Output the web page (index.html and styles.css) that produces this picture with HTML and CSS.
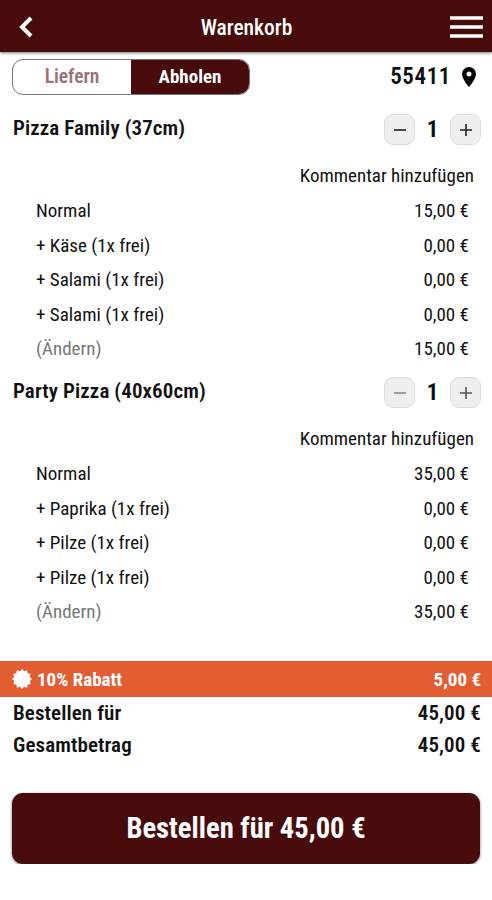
FILE: index.html
```html
<!DOCTYPE html>
<html lang="de">
<head>
<meta charset="utf-8">
<title>Warenkorb</title>
<link rel="stylesheet" href="styles.css">
</head>
<body>
<header class="topbar">
  <svg class="back" viewBox="0 0 14 22"><path d="M12 2 3 11l9 9"/></svg>
  <h1 class="title">Warenkorb</h1>
  <svg class="menu" viewBox="0 0 33 22"><path d="M0 2h33M0 11h33M0 20h33"/></svg>
</header>
<main>
  <section class="mode">
    <div class="toggle"><span class="option">Liefern</span><span class="option active">Abholen</span></div>
    <div class="place"><span>55411</span><svg class="pin" viewBox="0 0 14 20"><path fill-rule="evenodd" d="M7 0a7 7 0 0 0-7 7c0 5 7 13 7 13s7-8 7-13a7 7 0 0 0-7-7Zm0 4.5a2.5 2.5 0 1 1 0 5 2.5 2.5 0 0 1 0-5Z"/></svg></div>
  </section>
  <section class="item">
    <div class="head"><h2>Pizza Family (37cm)</h2>
      <div class="stepper"><button class="step"><svg viewBox="0 0 14 14"><path d="M1 7h12"/></svg></button><b>1</b><button class="step"><svg viewBox="0 0 14 14"><path d="M1 7h12M7 1v12"/></svg></button></div></div>
    <p class="comment">Kommentar hinzufügen</p>
    <div class="row"><span>Normal</span><span>15,00 €</span></div>
    <div class="row"><span>+ Käse (1x frei)</span><span>0,00 €</span></div>
    <div class="row"><span>+ Salami (1x frei)</span><span>0,00 €</span></div>
    <div class="row"><span>+ Salami (1x frei)</span><span>0,00 €</span></div>
    <div class="row"><span class="edit">(Ändern)</span><span>15,00 €</span></div>
  </section>
  <section class="item">
    <div class="head"><h2>Party Pizza (40x60cm)</h2>
      <div class="stepper"><button class="step muted"><svg viewBox="0 0 14 14"><path d="M1 7h12"/></svg></button><b>1</b><button class="step dim"><svg viewBox="0 0 14 14"><path d="M1 7h12M7 1v12"/></svg></button></div></div>
    <p class="comment">Kommentar hinzufügen</p>
    <div class="row"><span>Normal</span><span>35,00 €</span></div>
    <div class="row"><span>+ Paprika (1x frei)</span><span>0,00 €</span></div>
    <div class="row"><span>+ Pilze (1x frei)</span><span>0,00 €</span></div>
    <div class="row"><span>+ Pilze (1x frei)</span><span>0,00 €</span></div>
    <div class="row"><span class="edit">(Ändern)</span><span>35,00 €</span></div>
  </section>
  <section class="discount"><span class="label"><svg class="seal" viewBox="-10 -10 20 20"><path d="M0-10 2.1-7.7 5-8.7 5.7-5.7 8.7-5 7.7-2.1 10 0 7.7 2.1 8.7 5 5.7 5.7 5 8.7 2.1 7.7 0 10-2.1 7.7-5 8.7-5.7 5.7-8.7 5-7.7 2.1-10 0-7.7-2.1-8.7-5-5.7-5.7-5-8.7-2.1-7.7Z"/></svg><span>10% Rabatt</span></span><span>5,00 €</span></section>
  <section class="totals">
    <div class="total"><span>Bestellen für</span><span>45,00 €</span></div>
    <div class="total"><span>Gesamtbetrag</span><span>45,00 €</span></div>
  </section>
  <button class="order">Bestellen für 45,00 €</button>
</main>
</body>
</html>
```
FILE: styles.css
```css
* { box-sizing: border-box; }
body { margin: 0; background: #fff; color: #111; font-family: "Roboto Condensed", Roboto, sans-serif; font-stretch: 75%; font-size: 19px; }
h1, h2, p { margin: 0; }
button { font: inherit; font-stretch: inherit; padding: 0; }
svg { display: block; }
.topbar { height: 52px; padding: 2px 9px 0 19px; background: #480b0c; display: grid; grid-template-columns: 33px 1fr 33px; align-items: center; box-shadow: 0 1px 3px #0008; }
.back { width: 14px; height: 22px; fill: none; stroke: #fff; stroke-width: 4; }
.menu { width: 33px; height: 22px; stroke: #fff; stroke-width: 3.6; }
.title { color: #fff; font-size: 21.5px; font-weight: 500; text-align: center; padding-right: 9px; }
.mode { height: 49px; padding: 0 16px 0 12px; display: flex; align-items: center; justify-content: space-between; }
.toggle { width: 238px; height: 36px; display: grid; grid-template-columns: 1fr 1fr; border: 1px solid #777; border-radius: 11px; overflow: hidden; }
.option { display: flex; align-items: center; justify-content: center; color: #9b7475; font-weight: 600; font-size: 19.5px; }
.active { background: #480b0c; color: #fff; font-weight: 700; font-size: 19px; }
.place { display: flex; align-items: center; gap: 11px; font-size: 23px; font-weight: 600; letter-spacing: .6px; }
.pin { width: 14px; height: 20px; }
.item { height: 263px; }
.head { height: 57px; padding: 0 11px 0 13px; display: flex; align-items: center; justify-content: space-between; }
h2 { font-size: 21px; font-weight: 600; letter-spacing: .1px; padding-bottom: 3px; }
.stepper { display: flex; align-items: center; }
.stepper b { width: 35px; text-align: center; font-size: 23px; font-weight: 700; }
.step { width: 31px; height: 31px; display: grid; place-items: center; background: #efefef; border: 1px solid #ddd; border-radius: 9px; }
.step svg { width: 14px; height: 14px; stroke: #222; stroke-width: 1.6; }
.muted svg { stroke: #888; }
.dim svg { stroke: #555; }
.comment { height: 36px; line-height: 35px; padding-right: 18px; text-align: right; }
.row { height: 34.5px; line-height: 34.5px; padding: 0 23px 0 36px; display: flex; justify-content: space-between; }
.edit { color: #777; }
.discount { height: 36px; margin-top: 34px; padding: 0 11px 0 12px; display: flex; align-items: center; justify-content: space-between; background: #e35d32; color: #fff; font-weight: 700; }
.label { display: flex; align-items: center; gap: 5px; }
.seal { width: 20px; height: 20px; fill: #fff; }
.totals { padding: 0 11px 0 13px; font-size: 21px; font-weight: 600; letter-spacing: .1px; }
.total { height: 32px; line-height: 32px; display: flex; justify-content: space-between; }
.order { display: block; width: 468px; height: 71px; margin: 32px 12px 0; padding-bottom: 2px; background: #480b0c; border: 0; border-radius: 11px; color: #fff; font-size: 28.6px; font-weight: 700; box-shadow: 0 1px 3px #0008; }
```
